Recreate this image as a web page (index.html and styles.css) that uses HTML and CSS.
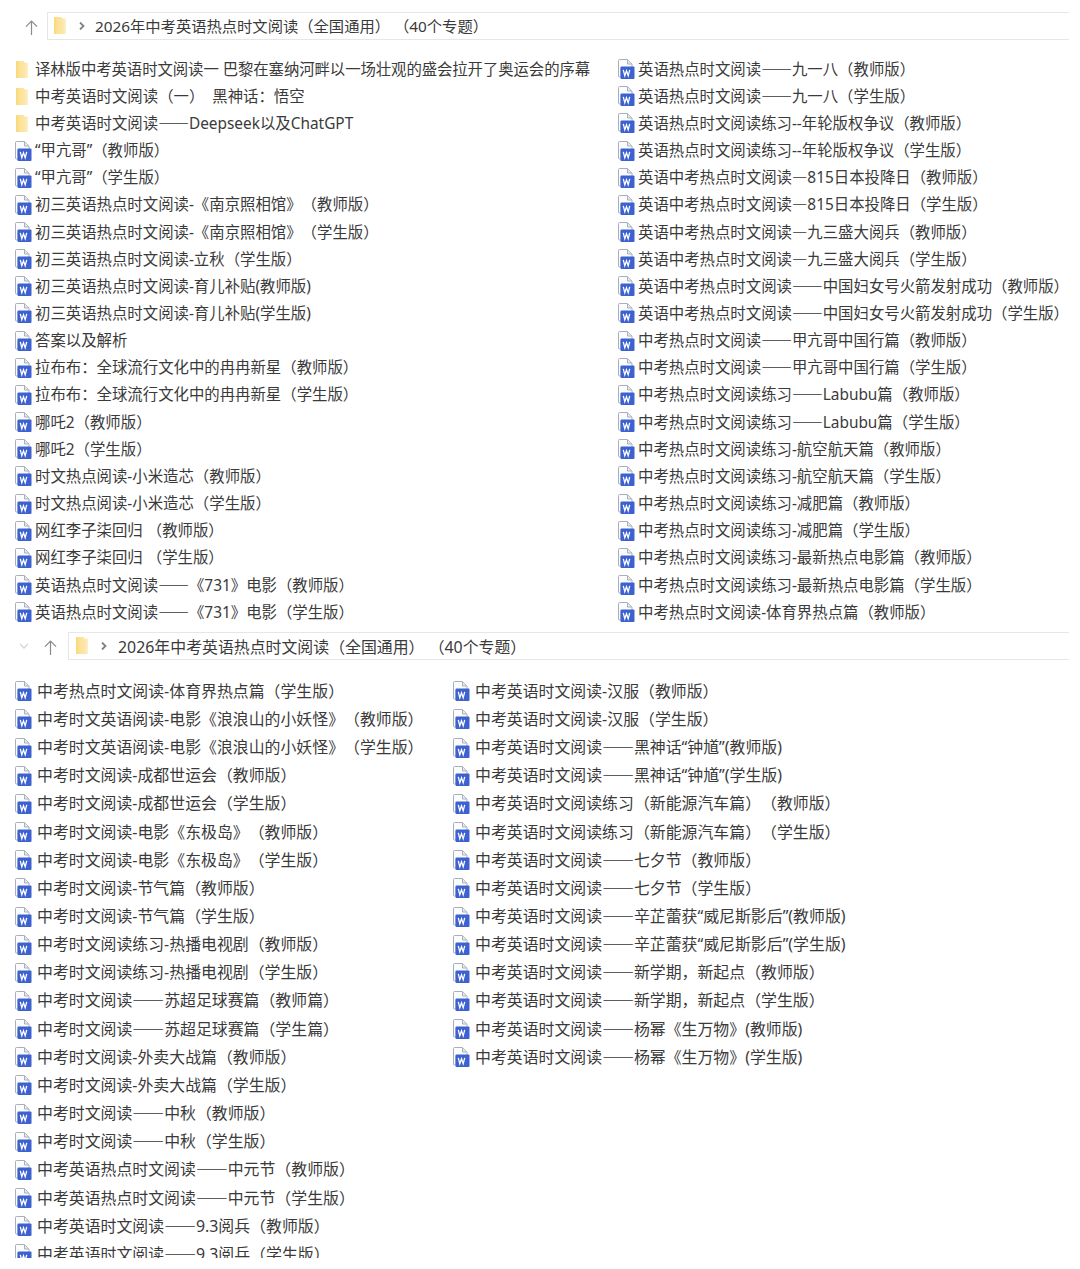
FILE: index.html
```html
<!DOCTYPE html>
<html lang="zh-CN">
<head>
<meta charset="utf-8">
<title>2026年中考英语热点时文阅读</title>
<link rel="stylesheet" href="styles.css">
</head>
<body>
<svg class="defs" width="0" height="0" aria-hidden="true">
  <defs>
    <linearGradient id="fg" x1="0" x2="1" y1="0" y2="0">
      <stop offset="0" stop-color="#f9d878"/><stop offset=".3" stop-color="#fbe299"/><stop offset=".75" stop-color="#fce7a9"/><stop offset="1" stop-color="#fdf0c8"/>
    </linearGradient>
    <symbol id="folder" viewBox="0 0 12 17">
      <path d="M0 0h7.500l1 1.500H12V17H0z" fill="url(#fg)"/>
    </symbol>
    <symbol id="word" viewBox="0 0 18 20">
      <path d="M1.500 1.500a1 1 0 0 1 1-1h8l4.500 4.500V9H4v9H2.500a1 1 0 0 1-1-1z" fill="#fbfcfe" stroke="#a9afba"/>
      <path d="M10.500 .8v4.200h4.200" fill="#e8ebf0" stroke="#a9afba"/>
      <rect x="3.500" y="7.500" width="14" height="12.500" rx="1" fill="#3d62d0"/>
      <path d="M6.300 10.800l1.500 6 1.700-5 1.700 5 1.500-6" fill="none" stroke="#fff" stroke-width="1.300"/>
    </symbol>
  </defs>
</svg>

<section class="panel">
  <div class="toolbar toolbar-a">
    <span class="nav-up"><svg width="13" height="17" viewBox="0 0 14 18"><path d="M7 17V2M1 8l6-6 6 6" fill="none" stroke="#8b8b8b" stroke-width="1.300"/></svg></span>
    <div class="address">
      <svg class="addr-folder" width="12" height="17"><use href="#folder"/></svg>
      <svg class="addr-chev" width="6" height="8" viewBox="0 0 6 8"><path d="M1 .5L4.500 4 1 7.500" fill="none" stroke="#808080" stroke-width="1.800"/></svg>
      <span class="addr-text">2026年中考英语热点时文阅读（全国通用） （40个专题）</span>
    </div>
  </div>
  <div class="list list-a">
    <div class="col col-a1">
      <div class="row"><svg class="ico-f"><use href="#folder"/></svg><span class="tight">译林版中考英语时文阅读一 巴黎在塞纳河畔以一场壮观的盛会拉开了奥运会的序幕</span></div>
      <div class="row"><svg class="ico-f"><use href="#folder"/></svg><span>中考英语时文阅读（一）  黑神话：悟空</span></div>
      <div class="row"><svg class="ico-f"><use href="#folder"/></svg><span>中考英语时文阅读<span class="d">——</span>Deepseek以及ChatGPT</span></div>
      <div class="row"><svg class="ico"><use href="#word"/></svg><span>“甲亢哥”（教师版）</span></div>
      <div class="row"><svg class="ico"><use href="#word"/></svg><span>“甲亢哥”（学生版）</span></div>
      <div class="row"><svg class="ico"><use href="#word"/></svg><span>初三英语热点时文阅读-《南京照相馆》（教师版）</span></div>
      <div class="row"><svg class="ico"><use href="#word"/></svg><span>初三英语热点时文阅读-《南京照相馆》（学生版）</span></div>
      <div class="row"><svg class="ico"><use href="#word"/></svg><span>初三英语热点时文阅读-立秋（学生版）</span></div>
      <div class="row"><svg class="ico"><use href="#word"/></svg><span>初三英语热点时文阅读-育儿补贴(教师版)</span></div>
      <div class="row"><svg class="ico"><use href="#word"/></svg><span>初三英语热点时文阅读-育儿补贴(学生版)</span></div>
      <div class="row"><svg class="ico"><use href="#word"/></svg><span>答案以及解析</span></div>
      <div class="row"><svg class="ico"><use href="#word"/></svg><span>拉布布：全球流行文化中的冉冉新星（教师版）</span></div>
      <div class="row"><svg class="ico"><use href="#word"/></svg><span>拉布布：全球流行文化中的冉冉新星（学生版）</span></div>
      <div class="row"><svg class="ico"><use href="#word"/></svg><span>哪吒2（教师版）</span></div>
      <div class="row"><svg class="ico"><use href="#word"/></svg><span>哪吒2（学生版）</span></div>
      <div class="row"><svg class="ico"><use href="#word"/></svg><span>时文热点阅读-小米造芯（教师版）</span></div>
      <div class="row"><svg class="ico"><use href="#word"/></svg><span>时文热点阅读-小米造芯（学生版）</span></div>
      <div class="row"><svg class="ico"><use href="#word"/></svg><span>网红李子柒回归 （教师版）</span></div>
      <div class="row"><svg class="ico"><use href="#word"/></svg><span>网红李子柒回归 （学生版）</span></div>
      <div class="row"><svg class="ico"><use href="#word"/></svg><span>英语热点时文阅读<span class="d">——</span>《731》电影（教师版）</span></div>
      <div class="row"><svg class="ico"><use href="#word"/></svg><span>英语热点时文阅读<span class="d">——</span>《731》电影（学生版）</span></div>
    </div>
    <div class="col">
      <div class="row"><svg class="ico"><use href="#word"/></svg><span>英语热点时文阅读<span class="d">——</span>九一八（教师版）</span></div>
      <div class="row"><svg class="ico"><use href="#word"/></svg><span>英语热点时文阅读<span class="d">——</span>九一八（学生版）</span></div>
      <div class="row"><svg class="ico"><use href="#word"/></svg><span>英语热点时文阅读练习--年轮版权争议（教师版）</span></div>
      <div class="row"><svg class="ico"><use href="#word"/></svg><span>英语热点时文阅读练习--年轮版权争议（学生版）</span></div>
      <div class="row"><svg class="ico"><use href="#word"/></svg><span>英语中考热点时文阅读<span class="d">—</span>815日本投降日（教师版）</span></div>
      <div class="row"><svg class="ico"><use href="#word"/></svg><span>英语中考热点时文阅读<span class="d">—</span>815日本投降日（学生版）</span></div>
      <div class="row"><svg class="ico"><use href="#word"/></svg><span>英语中考热点时文阅读<span class="d">—</span>九三盛大阅兵（教师版）</span></div>
      <div class="row"><svg class="ico"><use href="#word"/></svg><span>英语中考热点时文阅读<span class="d">—</span>九三盛大阅兵（学生版）</span></div>
      <div class="row"><svg class="ico"><use href="#word"/></svg><span>英语中考热点时文阅读<span class="d">——</span>中国妇女号火箭发射成功（教师版）</span></div>
      <div class="row"><svg class="ico"><use href="#word"/></svg><span>英语中考热点时文阅读<span class="d">——</span>中国妇女号火箭发射成功（学生版）</span></div>
      <div class="row"><svg class="ico"><use href="#word"/></svg><span>中考热点时文阅读<span class="d">——</span>甲亢哥中国行篇（教师版）</span></div>
      <div class="row"><svg class="ico"><use href="#word"/></svg><span>中考热点时文阅读<span class="d">——</span>甲亢哥中国行篇（学生版）</span></div>
      <div class="row"><svg class="ico"><use href="#word"/></svg><span>中考热点时文阅读练习<span class="d">——</span>Labubu篇（教师版）</span></div>
      <div class="row"><svg class="ico"><use href="#word"/></svg><span>中考热点时文阅读练习<span class="d">——</span>Labubu篇（学生版）</span></div>
      <div class="row"><svg class="ico"><use href="#word"/></svg><span>中考热点时文阅读练习-航空航天篇（教师版）</span></div>
      <div class="row"><svg class="ico"><use href="#word"/></svg><span>中考热点时文阅读练习-航空航天篇（学生版）</span></div>
      <div class="row"><svg class="ico"><use href="#word"/></svg><span>中考热点时文阅读练习-减肥篇（教师版）</span></div>
      <div class="row"><svg class="ico"><use href="#word"/></svg><span>中考热点时文阅读练习-减肥篇（学生版）</span></div>
      <div class="row"><svg class="ico"><use href="#word"/></svg><span>中考热点时文阅读练习-最新热点电影篇（教师版）</span></div>
      <div class="row"><svg class="ico"><use href="#word"/></svg><span>中考热点时文阅读练习-最新热点电影篇（学生版）</span></div>
      <div class="row"><svg class="ico"><use href="#word"/></svg><span>中考热点时文阅读-体育界热点篇（教师版）</span></div>
    </div>
  </div>
</section>

<section class="panel">
  <div class="toolbar toolbar-b">
    <span class="nav-down"><svg width="10" height="6" viewBox="0 0 10 6"><path d="M1 1l4 4 4-4" fill="none" stroke="#d4d4d4" stroke-width="1.300"/></svg></span>
    <span class="nav-up"><svg width="13" height="17" viewBox="0 0 14 18"><path d="M7 17V2M1 8l6-6 6 6" fill="none" stroke="#8b8b8b" stroke-width="1.300"/></svg></span>
    <div class="address">
      <svg class="addr-folder" width="12" height="17"><use href="#folder"/></svg>
      <svg class="addr-chev" width="6" height="8" viewBox="0 0 6 8"><path d="M1 .5L4.500 4 1 7.500" fill="none" stroke="#808080" stroke-width="1.800"/></svg>
      <span class="addr-text addr-text-b">2026年中考英语热点时文阅读（全国通用） （40个专题）</span>
    </div>
  </div>
  <div class="list list-b">
    <div class="col col-b1">
      <div class="row"><svg class="ico"><use href="#word"/></svg><span>中考热点时文阅读-体育界热点篇（学生版）</span></div>
      <div class="row"><svg class="ico"><use href="#word"/></svg><span>中考时文英语阅读-电影《浪浪山的小妖怪》（教师版）</span></div>
      <div class="row"><svg class="ico"><use href="#word"/></svg><span>中考时文英语阅读-电影《浪浪山的小妖怪》（学生版）</span></div>
      <div class="row"><svg class="ico"><use href="#word"/></svg><span>中考时文阅读-成都世运会（教师版）</span></div>
      <div class="row"><svg class="ico"><use href="#word"/></svg><span>中考时文阅读-成都世运会（学生版）</span></div>
      <div class="row"><svg class="ico"><use href="#word"/></svg><span>中考时文阅读-电影《东极岛》（教师版）</span></div>
      <div class="row"><svg class="ico"><use href="#word"/></svg><span>中考时文阅读-电影《东极岛》（学生版）</span></div>
      <div class="row"><svg class="ico"><use href="#word"/></svg><span>中考时文阅读-节气篇（教师版）</span></div>
      <div class="row"><svg class="ico"><use href="#word"/></svg><span>中考时文阅读-节气篇（学生版）</span></div>
      <div class="row"><svg class="ico"><use href="#word"/></svg><span>中考时文阅读练习-热播电视剧（教师版）</span></div>
      <div class="row"><svg class="ico"><use href="#word"/></svg><span>中考时文阅读练习-热播电视剧（学生版）</span></div>
      <div class="row"><svg class="ico"><use href="#word"/></svg><span>中考时文阅读<span class="d">——</span>苏超足球赛篇（教师篇）</span></div>
      <div class="row"><svg class="ico"><use href="#word"/></svg><span>中考时文阅读<span class="d">——</span>苏超足球赛篇（学生篇）</span></div>
      <div class="row"><svg class="ico"><use href="#word"/></svg><span>中考时文阅读-外卖大战篇（教师版）</span></div>
      <div class="row"><svg class="ico"><use href="#word"/></svg><span>中考时文阅读-外卖大战篇（学生版）</span></div>
      <div class="row"><svg class="ico"><use href="#word"/></svg><span>中考时文阅读<span class="d">——</span>中秋（教师版）</span></div>
      <div class="row"><svg class="ico"><use href="#word"/></svg><span>中考时文阅读<span class="d">——</span>中秋（学生版）</span></div>
      <div class="row"><svg class="ico"><use href="#word"/></svg><span>中考英语热点时文阅读<span class="d">——</span>中元节（教师版）</span></div>
      <div class="row"><svg class="ico"><use href="#word"/></svg><span>中考英语热点时文阅读<span class="d">——</span>中元节（学生版）</span></div>
      <div class="row"><svg class="ico"><use href="#word"/></svg><span>中考英语时文阅读<span class="d">——</span>9.3阅兵（教师版）</span></div>
      <div class="row"><svg class="ico"><use href="#word"/></svg><span>中考英语时文阅读<span class="d">——</span>9.3阅兵（学生版）</span></div>
    </div>
    <div class="col">
      <div class="row"><svg class="ico"><use href="#word"/></svg><span>中考英语时文阅读-汉服（教师版）</span></div>
      <div class="row"><svg class="ico"><use href="#word"/></svg><span>中考英语时文阅读-汉服（学生版）</span></div>
      <div class="row"><svg class="ico"><use href="#word"/></svg><span>中考英语时文阅读<span class="d">——</span>黑神话“钟馗”(教师版)</span></div>
      <div class="row"><svg class="ico"><use href="#word"/></svg><span>中考英语时文阅读<span class="d">——</span>黑神话“钟馗”(学生版)</span></div>
      <div class="row"><svg class="ico"><use href="#word"/></svg><span>中考英语时文阅读练习（新能源汽车篇）（教师版）</span></div>
      <div class="row"><svg class="ico"><use href="#word"/></svg><span>中考英语时文阅读练习（新能源汽车篇）（学生版）</span></div>
      <div class="row"><svg class="ico"><use href="#word"/></svg><span>中考英语时文阅读<span class="d">——</span>七夕节（教师版）</span></div>
      <div class="row"><svg class="ico"><use href="#word"/></svg><span>中考英语时文阅读<span class="d">——</span>七夕节（学生版）</span></div>
      <div class="row"><svg class="ico"><use href="#word"/></svg><span>中考英语时文阅读<span class="d">——</span>辛芷蕾获“威尼斯影后”(教师版)</span></div>
      <div class="row"><svg class="ico"><use href="#word"/></svg><span>中考英语时文阅读<span class="d">——</span>辛芷蕾获“威尼斯影后”(学生版)</span></div>
      <div class="row"><svg class="ico"><use href="#word"/></svg><span>中考英语时文阅读<span class="d">——</span>新学期，新起点（教师版）</span></div>
      <div class="row"><svg class="ico"><use href="#word"/></svg><span>中考英语时文阅读<span class="d">——</span>新学期，新起点（学生版）</span></div>
      <div class="row"><svg class="ico"><use href="#word"/></svg><span>中考英语时文阅读<span class="d">——</span>杨幂《生万物》(教师版)</span></div>
      <div class="row"><svg class="ico"><use href="#word"/></svg><span>中考英语时文阅读<span class="d">——</span>杨幂《生万物》(学生版)</span></div>
    </div>
  </div>
</section>
</body>
</html>
```
FILE: styles.css
```css
* { box-sizing: border-box; }
html, body { margin: 0; padding: 0; background: #fff; }
body {
  width: 1080px;
  height: 1269px;
  overflow: hidden;
  font-family: "Noto Sans", "Noto Sans CJK SC", sans-serif;
  color: #3a3a3a;
  padding-top: 12px;
  text-spacing-trim: space-all;
  font-kerning: none;
}
.defs { display: block; height: 0; }
.d { font-family: "Noto Sans CJK SC", sans-serif; }
.tight { letter-spacing: -0.080px; }
.toolbar { display: flex; align-items: center; height: 28px; }
.toolbar-a { padding-left: 25px; }
.toolbar-b { padding-left: 19px; margin-top: 6.500px; }
.nav-up { display: flex; width: 22px; justify-content: flex-start; margin-top: 3px; }
.nav-down { display: flex; width: 25px; }
.toolbar-b .nav-up { width: 24px; }
.address {
  flex: none;
  display: flex;
  align-items: center;
  height: 28px;
  border: 1px solid #e6e6e6;
  border-right: 0;
  padding-left: 6px;
}
.toolbar-a .address { width: 1022px; }
.toolbar-b .address { width: 1001px; padding-left: 7px; }
.addr-folder { margin-right: 13px; margin-top: -1px; }
.addr-chev { margin-right: 10px; }
.toolbar-b .addr-chev { margin-right: 11px; }
.addr-text { font-size: 15.300px; white-space: pre; margin-bottom: 2px; }
.addr-text-b { font-size: 15.900px; margin-bottom: 0; }
.list { display: flex; padding-left: 14px; overflow: hidden; }
.list-a { margin-top: 15.500px; font-size: 15.400px; }
.list-a .row { height: 27.170px; gap: 3px; }
.col-a1 { width: 603px; }
.list-b { margin-top: 16.900px; height: 581px; font-size: 15.900px; }
.list-b .row { height: 28.160px; gap: 5px; }
.col-b1 { width: 438px; }
.col { display: flex; flex-direction: column; flex: none; }
.row { display: flex; align-items: center; white-space: pre; flex: none; }
.row > span { margin-bottom: 2px; }
.ico { width: 18px; height: 20px; flex: none; }
.ico-f { width: 12px; height: 17px; flex: none; margin: 0 4px 0 2px; }
```
